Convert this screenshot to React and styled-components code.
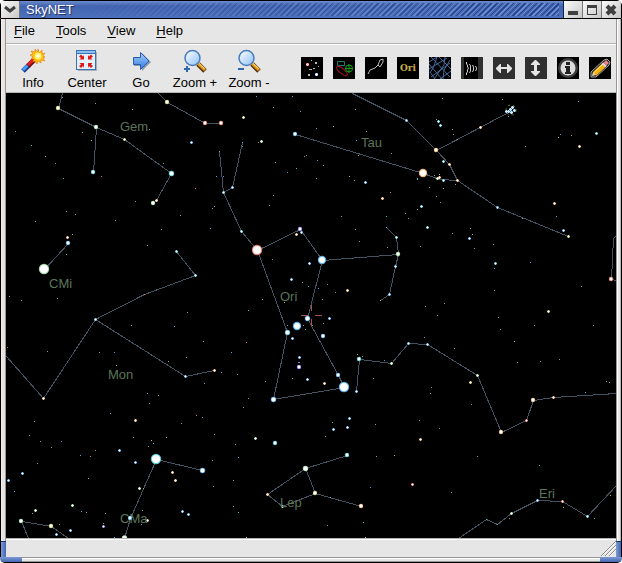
import styled, { createGlobalStyle } from "styled-components";

const GlobalStyle = createGlobalStyle`
  body {
    margin: 0;
    background: #fff;
    font-family: "Liberation Sans", Arial, sans-serif;
    font-size: 13px;
    color: #000;
  }
  button {
    margin: 0;
    padding: 0;
    border: none;
    background: none;
    font: inherit;
    color: inherit;
    cursor: pointer;
  }
  svg {
    display: block;
  }
`;

const Window = styled.div`
  display: flex;
  flex-direction: column;
  height: 100vh;
  background: #e6e6e6;
  border-radius: 5px;
  overflow: hidden;
`;

const TitleBar = styled.header`
  display: flex;
  height: 17px;
  border: 1px solid #000;
  border-radius: 5px 5px 0 0;
`;

const TitleButton = styled.button`
  display: flex;
  align-items: center;
  justify-content: center;
  box-sizing: border-box;
  width: 19px;
  background: linear-gradient(135deg, #fafafa, #c8c8c8);
  border-right: 1px solid ${(props) => (props.$last ? "#c8c8c8" : "#777")};
`;

const Title = styled.h1`
  display: flex;
  align-items: center;
  flex: 1;
  gap: 4px;
  margin: 0;
  padding-left: 6px;
  border-right: 1px solid #0d1f55;
  background: linear-gradient(#6c8cca, #4264b0 30%, #4e72bd);
  color: #fff;
  font-size: 13px;
  font-weight: normal;
  line-height: 16px;
  text-shadow: 1px 1px 1px #1b2c60;
`;

const Stripes = styled.span`
  flex: 1;
  height: 13px;
  margin-right: 4px;
  background: repeating-linear-gradient(
    135deg,
    #223f8a 0 1px,
    #4568b4 1px 2px,
    #7292d0 2px 3px,
    #4568b4 3px 4px
  );
  mask-image: linear-gradient(90deg, transparent, #000);
`;

const Body = styled.div`
  display: flex;
  flex: 1;
  min-height: 0;
`;

const Side = styled.div`
  display: flex;
  flex-direction: column;
  width: 6px;
`;

const Rail = styled.div`
  flex: 1;
  box-sizing: border-box;
  background: ${(props) =>
    props.$right
      ? "linear-gradient(90deg, #969696 1px, #fff 1px 2px, #e8e6e6 2px 4px, #b8b4b4 4px 5px, #000 5px)"
      : "linear-gradient(90deg, #000 1px, #f2eeee 1px 2px, #e8e2e2 2px 5px, #969696 5px)"};
`;

const SideHandle = styled.div`
  height: 16px;
  box-sizing: border-box;
  border: solid #000;
  border-width: ${(props) => (props.$right ? "1px 1px 0 0" : "1px 0 0 1px")};
  border-top-color: #1b3270;
  background: linear-gradient(90deg, #7d9ad4, #4467b2);
`;

const Main = styled.main`
  display: flex;
  flex-direction: column;
  flex: 1;
  min-width: 0;
`;

const BottomEdge = styled.div`
  display: flex;
  height: 6px;
`;

const BottomHandle = styled.div`
  box-sizing: border-box;
  width: 22px;
  border-bottom: 1px solid #000;
  background: linear-gradient(#7d9ad4, #4467b2);
  border-radius: ${(props) => (props.$right ? "0 0 4px 0" : "0 0 0 4px")};
`;

const BottomRail = styled.div`
  flex: 1;
  background: linear-gradient(
    #969696 1px,
    #fff 1px 2px,
    #e6e6e6 2px 4px,
    #969696 4px 5px,
    #000 5px
  );
`;

const MenuBar = styled.nav`
  display: flex;
  align-items: center;
  gap: 21px;
  height: 24px;
  padding-left: 8px;
  border-bottom: 1px solid #b4b4b4;
`;

const MenuItem = styled.button`
  line-height: 16px;
  u {
    text-underline-offset: 2px;
  }
`;

const ToolBar = styled.div`
  display: flex;
  align-items: center;
  height: 47px;
  border-top: 1px solid #fff;
  border-bottom: 1px solid #b4b8b4;
`;

const Tool = styled.button`
  display: flex;
  flex-direction: column;
  align-items: center;
  gap: 2px;
  width: 54px;
  line-height: 16px;
  white-space: nowrap;
  padding-top: 2px;
`;

const Toggles = styled.div`
  display: flex;
  gap: 10px;
  margin-left: auto;
  padding: 0 5px 2px 0;
`;

const Toggle = styled.button`
  display: flex;
  align-items: center;
  justify-content: center;
  width: 22px;
  height: 22px;
  background: ${(props) => props.$bg || "#000"};
  color: #c8ac4c;
  font-family: "DejaVu Serif", serif;
  font-size: 9px;
  font-weight: bold;
`;

const Sky = styled.svg`
  flex: 1;
  width: 100%;
  min-height: 0;
  background: #000;
  text {
    fill: #5c755c;
    font-size: 13px;
  }
`;

const StatusBar = styled.footer`
  display: flex;
  align-items: flex-end;
  justify-content: flex-end;
  height: 17px;
  border-top: 1px solid #b4b4b4;
  box-shadow: inset 0 1px #fff;
  padding-bottom: 1px;
`;

const colors = {
  w: "#a4aaa4",
  b: "#62b4ee",
  c: "#56cbdc",
  g: "#a6dcae",
  y: "#ccd07c",
  o: "#eeb67c",
  r: "#f0806c",
  p: "#8c80f0",
};

// constellation figures, one polyline each
const figures = [
  "62,93 58,108 96,127 124,139 171,173 156,200 153,203",
  "96,127 93,172",
  "158,93 167,102 205,123 221,123",
  "68,243 44,269",
  "219,151 223,192 232,187 242,142",
  "223,192 241,231 257,250 300,229 322,260 398,254 395,266 389,294 380,300",
  "386,227 396,237 398,254",
  "257,250 287,332 273,399 344,387 338,375 307,318 322,260",
  "352,93 406,120 436,150 510,111",
  "295,134 423,173 439,179 457,180",
  "436,150 449,164 457,180 497,207 568,236",
  "615,236 613,238 611,279 616,280",
  "176,251 195,275 144,294 95,319 185,376 214,370",
  "95,319 43,398 6,356",
  "356,391 359,359 391,363 408,343 427,344 477,375 501,432 526,420 533,400 553,397 616,393",
  "202,470 156,459 130,518 124,538",
  "28,538 21,521 51,526 68,538",
  "347,455 305,468 267,494 282,506 315,493 361,506",
  "305,468 315,493",
  "458,538 486,519 497,524 511,513 537,500 562,501 587,516 616,485",
];

// single pixel stars, flat x, y pairs by colour
const faint = {
  w: [
    15, 131, 55, 163, 82, 132, 95, 103, 62, 97, 163, 163, 135, 201, 161, 229,
    115, 220, 66, 211, 75, 214, 35, 221, 147, 245, 273, 107, 355, 109, 366, 131,
    391, 153, 242, 146, 219, 151, 275, 162, 323, 165, 354, 180, 212, 208, 273,
    195, 269, 205, 341, 216, 405, 213, 355, 229, 359, 241, 387, 247, 502, 99,
    436, 119, 453, 134, 457, 139, 525, 146, 571, 135, 429, 187, 436, 196, 417,
    209, 452, 233, 493, 244, 474, 248, 420, 246, 522, 218, 455, 184, 434, 175,
    9, 296, 21, 300, 57, 298, 7, 347, 47, 351, 99, 352, 131, 325, 187, 312, 203,
    341, 186, 357, 168, 361, 147, 393, 272, 259, 302, 282, 327, 284, 335, 292,
    322, 299, 265, 381, 248, 398, 292, 378, 287, 325, 305, 329, 312, 325, 303,
    325, 323, 323, 357, 354, 362, 356, 373, 378, 237, 374, 494, 290, 581, 286,
    444, 303, 437, 315, 498, 317, 593, 325, 424, 337, 517, 362, 559, 359, 606,
    381, 609, 382, 431, 387, 430, 393, 149, 403, 34, 421, 29, 435, 40, 441, 51,
    447, 37, 463, 95, 450, 90, 456, 86, 512, 105, 513, 59, 524, 32, 513, 103,
    523, 148, 446, 133, 437, 181, 423, 214, 434, 235, 444, 212, 460, 213, 486,
    233, 480, 233, 506, 243, 407, 142, 510, 141, 524, 143, 488, 325, 436, 375,
    424, 419, 420, 439, 428, 471, 404, 376, 456, 451, 492, 477, 456, 327, 525,
    509, 518,
  ],
  b: [
    256, 96, 292, 96, 300, 111, 316, 128, 356, 140, 242, 142, 304, 156, 317,
    160, 287, 172, 316, 178, 216, 176, 223, 176, 214, 206, 210, 228, 408, 218,
    442, 98, 578, 101, 560, 134, 440, 202, 470, 228, 556, 216, 508, 116, 114,
    352, 174, 326, 204, 383, 308, 286, 318, 288, 231, 352, 221, 372, 384, 360,
    530, 262, 494, 268, 425, 306, 500, 329, 534, 325, 540, 361, 585, 392, 110,
    413, 80, 455, 14, 491, 81, 511, 202, 417, 238, 457, 370, 487,
  ],
  c: [
    31, 145, 149, 129, 63, 178, 180, 215, 296, 168, 386, 216, 386, 227, 452,
    129, 417, 178, 417, 179, 66, 254, 248, 310, 454, 348, 153, 443, 238, 512,
    114, 537, 332, 422, 539, 465, 330, 497, 363, 522, 486, 519, 497, 524, 594,
    518,
  ],
  y: [
    45, 156, 91, 140, 132, 109, 72, 234, 333, 126, 358, 155, 349, 176, 558, 137,
    443, 188, 472, 234, 439, 174, 116, 365, 158, 395, 262, 299, 284, 302, 380,
    300, 514, 341, 88, 478, 151, 440, 166, 437, 246, 537, 394, 455, 563, 507,
    610, 495, 365, 537,
  ],
  r: [
    101, 176, 195, 188, 258, 142, 306, 155, 390, 192, 144, 294, 246, 342, 196,
    415,
  ],
  p: [61, 441, 298, 362, 299, 362],
};

// three pixel stars
const small = {
  b: [
    191, 142, 406, 120, 365, 182, 232, 187, 301, 232, 469, 238, 497, 207, 563,
    230, 185, 376, 309, 263, 291, 279, 395, 266, 389, 294, 329, 318, 292, 338,
    299, 357, 307, 379, 408, 343, 356, 391, 427, 344, 119, 450, 135, 462, 22,
    473, 8, 480, 56, 534, 70, 530, 182, 511, 188, 514, 349, 418, 347, 427, 333,
    429, 537, 500,
  ],
  c: [
    176, 251, 223, 192, 241, 231, 396, 237, 438, 121, 440, 125, 443, 161, 443,
    180, 421, 206, 427, 227, 596, 133, 195, 275, 95, 319, 495, 263, 587, 516,
  ],
  g: [
    261, 141, 437, 178, 391, 363, 477, 375, 139, 488, 72, 505, 35, 510, 255,
    438, 282, 506, 511, 513,
  ],
  y: [124, 139, 243, 117, 568, 236, 548, 311, 470, 382],
  o: [
    156, 200, 67, 237, 382, 198, 296, 234, 480, 127, 449, 164, 439, 177, 457,
    180, 579, 146, 554, 203, 43, 398, 347, 290, 214, 370, 324, 383, 553, 397,
    135, 420, 172, 472, 175, 480, 147, 520, 267, 494, 420, 439,
  ],
  r: [412, 484, 526, 420, 562, 501],
  p: [103, 526],
};

// x, y, radius, colour
const bright = [
  [58, 108, 2, "y"],
  [96, 127, 2, "g"],
  [93, 172, 2, "c"],
  [171.5, 173.5, 2.5, "c"],
  [153, 203, 2, "g"],
  [68, 243, 2, "b"],
  [167, 102, 2, "y"],
  [205, 123, 2, "r"],
  [221, 123, 2, "r"],
  [295, 134, 2, "b"],
  [257, 250, 5, "r"],
  [300, 229, 2, "p"],
  [436, 150, 2, "o"],
  [423, 173, 4, "o"],
  [44, 269, 5, "g"],
  [322, 260, 4, "b"],
  [398, 254, 2, "g"],
  [307.5, 318.5, 2.5, "b"],
  [297, 326, 4, "b"],
  [287.5, 332.5, 2.5, "b"],
  [323, 336, 2, "b"],
  [299, 367, 2, "p"],
  [338, 375, 2, "b"],
  [344, 387, 5, "b"],
  [273.5, 399.5, 2.5, "b"],
  [359, 359, 2, "c"],
  [611, 279, 2, "r"],
  [156, 459, 5, "c"],
  [202.5, 470.5, 2.5, "b"],
  [21, 521, 2, "g"],
  [51, 526, 2, "y"],
  [130, 518, 2, "b"],
  [124.5, 538, 2.5, "g"],
  [275, 443, 2, "c"],
  [305.5, 468.5, 2.5, "g"],
  [347, 455, 2, "c"],
  [315, 493, 2, "y"],
  [361, 506, 2, "o"],
  [501, 432, 2, "o"],
  [533, 400, 2, "o"],
];

// Pleiades
const cluster = [508, 111, 510, 109, 512, 107, 511, 112, 514, 110, 506, 111];

const labels = [
  ["Gem", 120, 131],
  ["Tau", 361, 147],
  ["CMi", 49, 288],
  ["Ori", 280, 301],
  ["Mon", 108, 379],
  ["Lep", 280, 507],
  ["CMa", 120, 523],
  ["Eri", 539, 498],
];

function toPath(points, shape) {
  let d = "";
  for (let i = 0; i < points.length; i += 2) {
    d += shape(points[i], points[i + 1]);
  }
  return d;
}

const dot = (x, y) => `M${x} ${y}h1v1h-1z`;
const block = (x, y) => `M${x - 1} ${y - 1}h3v3h-3z`;
const cross = (x, y) =>
  `M${x} ${y - 1}h1v1h1v1h-1v1h-1v-1h-1v-1h1z`;

function StarMap() {
  return (
    <Sky
      viewBox="6 93 610 445"
      preserveAspectRatio="xMidYMid slice"
      role="img"
      aria-label="Star map around Orion"
    >
      <g shapeRendering="crispEdges">
        {figures.map((points) => (
          <polyline
            key={points}
            points={points}
            transform="translate(0.5 0.5)"
            fill="none"
            stroke="#46525f"
          />
        ))}
        {Object.keys(faint).map((key) => (
          <path
            key={key}
            d={toPath(faint[key], dot)}
            fill={colors[key]}
            opacity="0.9"
          />
        ))}
        {Object.keys(small).map((key) => (
          <g key={key} fill={colors[key]}>
            <path d={toPath(small[key], block)} opacity="0.4" />
            <path d={toPath(small[key], cross)} />
            <path d={toPath(small[key], cross)} fill="#fff" opacity="0.3" />
            <path d={toPath(small[key], dot)} fill="#fff" />
          </g>
        ))}
        <path d={toPath(cluster, block)} fill={colors.b} opacity="0.7" />
        <path d={toPath(cluster, cross)} fill="#d0ecff" />
        <path
          d="M301 315h7v1h-7zM315 315h7v1h-7zM311 305h1v6h-1zM311 319h1v7h-1z"
          fill="#a05454"
        />
      </g>
      {labels.map(([name, x, y]) => (
        <text key={name} x={x} y={y}>
          {name}
        </text>
      ))}
      {bright.map(([x, y, r, color]) => (
        <g key={`${x},${y}`}>
          <circle cx={x} cy={y} r={r + 0.2} fill={colors[color]} />
          <circle cx={x} cy={y} r={r > 3 ? r - 1 : r - 0.6} fill="#fff" />
        </g>
      ))}
      <circle
        cx="511"
        cy="110"
        r="5"
        fill="none"
        stroke="#8a8020"
        strokeDasharray="2 3"
      />
    </Sky>
  );
}

function WandIcon() {
  return (
    <svg width="24" height="24" viewBox="0 0 24 24">
      <path d="M2 22L8 16" stroke="#153a8c" strokeWidth="5" />
      <path d="M2 21L8 15" stroke="#4f9cf8" strokeWidth="3" />
      <path d="M7 17L15 9" stroke="#700c10" strokeWidth="5" />
      <path d="M7 16L14 9" stroke="#e02020" strokeWidth="3" />
      <path
        d="M17 0l1 4 3-3v4l3-1-2 3 2 1-2 1 2 3-4-1v3l-3-2-1 3-2-3-2 1 1-3-3 0 2-2-3-2 3-1-2-3 4 1v-3l3 3z"
        fill="#ffc010"
        stroke="#e87808"
        strokeWidth="0.6"
      />
      <circle cx="17" cy="7" r="3.4" fill="#fff46a" />
      <circle cx="17" cy="7" r="1.6" fill="#fff" />
    </svg>
  );
}

function CenterIcon() {
  return (
    <svg width="24" height="24" viewBox="0 0 24 24">
      <path d="M3 3h19v19H3z" fill="#a8b0bc" />
      <path d="M1 1h20v20H1z" fill="#3a72b4" />
      <path d="M2 2h18v2H2z" fill="#8cc0f0" />
      <path d="M2 5h18v15H2z" fill="#e4f0fc" />
      <g fill="#e01818">
        <path d="M9 10.500V6L8 7.500 6 5.500 4 7.500 6 9 4.500 10.500zM13 10.500V6l1 1.500 2-2 2 2-2 1.500 1.500 1.500zM9 14v5l-1-2-2 2-2-2 2-1.500-1.500-1.500zM13 14v5l1-2 2 2 2-2-2-1.500 1.500-1.500z" />
      </g>
    </svg>
  );
}

function GoIcon() {
  return (
    <svg width="24" height="24" viewBox="0 0 24 24">
      <defs>
        <linearGradient id="go" x2="0" y2="1">
          <stop offset="0" stopColor="#a8d0ff" />
          <stop offset="1" stopColor="#2f78e0" />
        </linearGradient>
      </defs>
      <path d="M5 9h8V4l9 9-9 9v-5H5z" fill="#8c98a8" />
      <path
        d="M4.500 8.500h7v-5L20 12l-8.500 8.500v-5h-7z"
        fill="url(#go)"
        stroke="#2c5cae"
      />
    </svg>
  );
}

function ZoomIcon({ plus }) {
  return (
    <svg width="24" height="24" viewBox="0 0 24 24">
      <defs>
        <linearGradient id={plus ? "lensIn" : "lensOut"} x2="1" y2="1">
          <stop offset="0" stopColor="#fff" />
          <stop offset="1" stopColor="#8cc0f8" />
        </linearGradient>
      </defs>
      <path d="M15 15l7 7" stroke="#5a3408" strokeWidth="5" />
      <path d="M15 14.500l7 6.500" stroke="#e09820" strokeWidth="3" />
      <path d="M15.500 14l6 5.500" stroke="#ffe08c" />
      <circle
        cx="9.500"
        cy="9"
        r="7.500"
        fill={plus ? "url(#lensIn)" : "url(#lensOut)"}
        stroke="#4a7cbc"
        strokeWidth="1.500"
      />
      <path d="M1 19h6v2H1z" fill="#2c68ac" />
      {plus && <path d="M3 17h2v6H3z" fill="#2c68ac" />}
    </svg>
  );
}

const tools = [
  { label: "Info", icon: <WandIcon /> },
  { label: "Center", icon: <CenterIcon /> },
  { label: "Go", icon: <GoIcon /> },
  { label: "Zoom +", icon: <ZoomIcon plus /> },
  { label: "Zoom -", icon: <ZoomIcon /> },
];

const toggles = [
  {
    name: "Stars",
    icon: (
      <g fill="#bbb">
        <path d="M10 3h1v1h-1zM14 5h2v2h-2zM8 12h3v1H8zM12 11h2v1h-2zM7 17h2v2H7zM17 9h1v1h-1z" />
        <path d="M5 6h3v3H5z" fill="#e05050" />
        <path d="M6 6h1v3H6zM5 7h3v1H5z" fill="#fcc" />
        <path d="M14 16h3v3h-3z" fill="#60a0f0" />
        <path d="M15 16h1v3h-1zM14 17h3v1h-3z" fill="#fff" />
      </g>
    ),
  },
  {
    name: "Deep sky objects",
    icon: (
      <g fill="none">
        <path d="M4.500 4.500h7v4h-7z" stroke="#1c7c68" />
        <ellipse
          cx="9"
          cy="14"
          rx="6.500"
          ry="2.500"
          transform="rotate(40 9 14)"
          stroke="#b01414"
        />
        <circle cx="16" cy="11.500" r="3.500" stroke="#14a014" />
        <path d="M16 7v9M12 11.500h8" stroke="#14a014" />
      </g>
    ),
  },
  {
    name: "Constellation lines",
    icon: (
      <path
        d="M3 17l2-4 5-2 3-3 2-5 3-1v3l-3 5-2-2"
        fill="none"
        stroke="#bcbcbc"
      />
    ),
  },
  { name: "Constellation names", text: "Ori" },
  {
    name: "Grid",
    icon: (
      <path
        d="M0 5l8-5M0 12L18 1M2 20L21 6M11 22l11-8M2 0l19 20M0 7l13 15M10 0l12 12M1 15l5 7M16 0l-1 8-10 14M21 3l-6 10-1 9M8 0L5 9 1 16"
        fill="none"
        stroke="#46699a"
      />
    ),
  },
  {
    name: "Night mode",
    bg: "linear-gradient(90deg, #303030 3px, #000 3px 17px, #303030 17px)",
    icon: (
      <path
        d="M5.500 5v2l1 1v2l1 1-1 2v2l-1 1v2M8.500 7l1 2v5l-1 2M11.500 8l1 2v3l-1 2M14.500 9l1 2v1l-1 2"
        fill="none"
        stroke="#cfcfcf"
      />
    ),
  },
  {
    name: "Flip horizontally",
    bg: "#303030",
    icon: <path d="M3 11l4-4h1v3h6V7h1l4 4v1l-4 4h-1v-4H8v4H7l-4-4z" fill="#e6e6e6" />,
  },
  {
    name: "Flip vertically",
    bg: "#303030",
    icon: <path d="M10 3h1l4 4v1h-3v6h3v1l-4 4h-1l-4-4v-1h3V8H6V7z" fill="#e6e6e6" />,
  },
  {
    name: "Object information",
    icon: (
      <g>
        <circle cx="11" cy="11" r="10" fill="#3c3c3c" />
        <circle cx="11" cy="11" r="7.500" fill="#dcdcdc" />
        <path d="M9 5h4v3H9zM8 9h5v6h1v2H8v-2h1v-4H8z" fill="#222" />
      </g>
    ),
  },
  {
    name: "Edit",
    icon: (
      <g>
        <path
          d="M2 20v-5L15 3l3-1 3 3-1 3L7 20z"
          fill="#222"
          stroke="#a8a8a8"
        />
        <path d="M5.500 17L15 8" stroke="#f8b010" strokeWidth="5" />
        <path d="M5 15.500L14 7" stroke="#fff08c" />
        <path d="M14.500 8.500L16 7" stroke="#d8d8e8" strokeWidth="5" />
        <path d="M16 7l2.500-2.500" stroke="#f08088" strokeWidth="4" />
        <path d="M3 19l1-4 3 3z" fill="#f0d8a4" />
      </g>
    ),
  },
];

const menus = ["File", "Tools", "View", "Help"];

function App() {
  return (
    <>
      <GlobalStyle />
      <Window>
        <TitleBar>
          <TitleButton aria-label="Window menu">
            <svg width="14" height="10" viewBox="0 0 14 10">
              <path
                d="M2 2l5 4 5-4"
                fill="none"
                stroke="#404040"
                strokeWidth="3"
              />
            </svg>
          </TitleButton>
          <Title>
            SkyNET
            <Stripes />
          </Title>
          <TitleButton aria-label="Minimize">
            <svg width="12" height="12" viewBox="0 0 12 12">
              <path d="M1 7h10v4H1z" fill="#404040" />
            </svg>
          </TitleButton>
          <TitleButton aria-label="Maximize">
            <svg width="12" height="12" viewBox="0 0 12 12">
              <path d="M1 1h10v10H1zM2 4v6h8V4z" fill="#404040" fillRule="evenodd" />
            </svg>
          </TitleButton>
          <TitleButton aria-label="Close" $last>
            <svg width="12" height="12" viewBox="0 0 12 12">
              <path d="M2 2l8 8M10 2l-8 8" stroke="#404040" strokeWidth="4" />
            </svg>
          </TitleButton>
        </TitleBar>
        <Body>
          <Side>
            <Rail />
            <SideHandle />
          </Side>
          <Main>
            <MenuBar>
              {menus.map((menu) => (
                <MenuItem key={menu}>
                  <u>{menu[0]}</u>
                  {menu.slice(1)}
                </MenuItem>
              ))}
            </MenuBar>
            <ToolBar>
              {tools.map((tool) => (
                <Tool key={tool.label}>
                  {tool.icon}
                  {tool.label}
                </Tool>
              ))}
              <Toggles>
                {toggles.map((toggle) => (
                  <Toggle
                    key={toggle.name}
                    $bg={toggle.bg}
                    aria-label={toggle.name}
                  >
                    {toggle.text || (
                      <svg width="22" height="22" viewBox="0 0 22 22">
                        {toggle.icon}
                      </svg>
                    )}
                  </Toggle>
                ))}
              </Toggles>
            </ToolBar>
            <StarMap />
            <StatusBar>
              <svg width="16" height="16" viewBox="0 0 16 16">
                <path d="M1 16L16 1M5 16L16 5M9 16l7-7" stroke="#8c8c8c" />
                <path d="M2 16L16 2M6 16L16 6M10 16l6-6" stroke="#fff" />
              </svg>
            </StatusBar>
          </Main>
          <Side>
            <Rail $right />
            <SideHandle $right />
          </Side>
        </Body>
        <BottomEdge>
          <BottomHandle />
          <BottomRail />
          <BottomHandle $right />
        </BottomEdge>
      </Window>
    </>
  );
}

export default App;
